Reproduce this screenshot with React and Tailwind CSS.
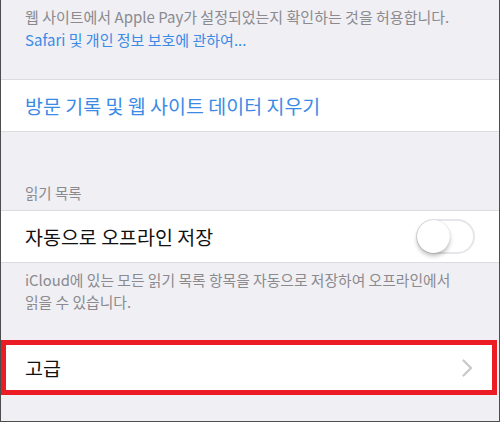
import React from "react";

const font = { fontFamily: '"Noto Sans CJK KR", "Noto Sans", sans-serif' };

// iOS 스타일 토글 (꺼진 상태)
const Toggle = () => (
  <div className="relative w-[59px] h-[35px] rounded-full border-2 border-[#e6e6ea] bg-white">
    <div className="absolute left-[-1px] top-[-1px] w-[33px] h-[33px] rounded-full bg-white shadow-[0_3px_4px_rgba(0,0,0,0.25),0_0_1px_rgba(0,0,0,0.2)]" />
  </div>
);

const Chevron = () => (
  <svg width="11" height="18" viewBox="0 0 11 18" fill="none">
    <path d="M1.5 1.5 L9 9 L1.5 16.5" stroke="#c7c7cc" strokeWidth="2.2" strokeLinecap="round" strokeLinejoin="round" />
  </svg>
);

export default function App() {
  return (
    <div
      className="w-[500px] h-[422px] bg-[#efeff4] border-x border-b border-[#4d4d4d] overflow-hidden flex flex-col"
      style={font}
    >
      {/* 상단 설명 */}
      <div className="px-[24px] pt-[5px] text-[15px] leading-[23px]">
        <p className="text-[#8a8a8f]">
          웹 사이트에서 Apple Pay가 설정되었는지 확인하는 것을 허용합니다.
        </p>
        <p className="text-[#3b8be6]">Safari 및 개인 정보 보호에 관하여...</p>
      </div>

      {/* 기록 지우기 */}
      <div className="mt-[28px] h-[53px] bg-white border-y border-[#dcdce0] flex items-center px-[24px]">
        <span className="text-[19.5px] text-[#3b8be6]">
          방문 기록 및 웹 사이트 데이터 지우기
        </span>
      </div>

      {/* 읽기 목록 */}
      <div className="h-[78px] flex items-end px-[24px] pb-[6px]">
        <span className="text-[14.5px] text-[#8a8a8f]">읽기 목록</span>
      </div>
      <div className="h-[53px] bg-white border-y border-[#dcdce0] flex items-center justify-between pl-[24px] pr-[24px]">
        <span className="text-[19.5px] text-[#111]">자동으로 오프라인 저장</span>
        <Toggle />
      </div>
      <div className="px-[24px] pt-[6px] text-[14.8px] leading-[22px] text-[#8a8a8f]">
        <p>iCloud에 있는 모든 읽기 목록 항목을 자동으로 저장하여 오프라인에서</p>
        <p>읽을 수 있습니다.</p>
      </div>

      {/* 고급 (빨간 테두리 강조) */}
      <div className="mt-[27px] mr-[2px] border-[5px] border-[#ec1c24] bg-white h-[55px] flex items-center justify-between pl-[19px] pr-[19px]">
        <span className="text-[19.5px] text-[#111]">고급</span>
        <Chevron />
      </div>
    </div>
  );
}
